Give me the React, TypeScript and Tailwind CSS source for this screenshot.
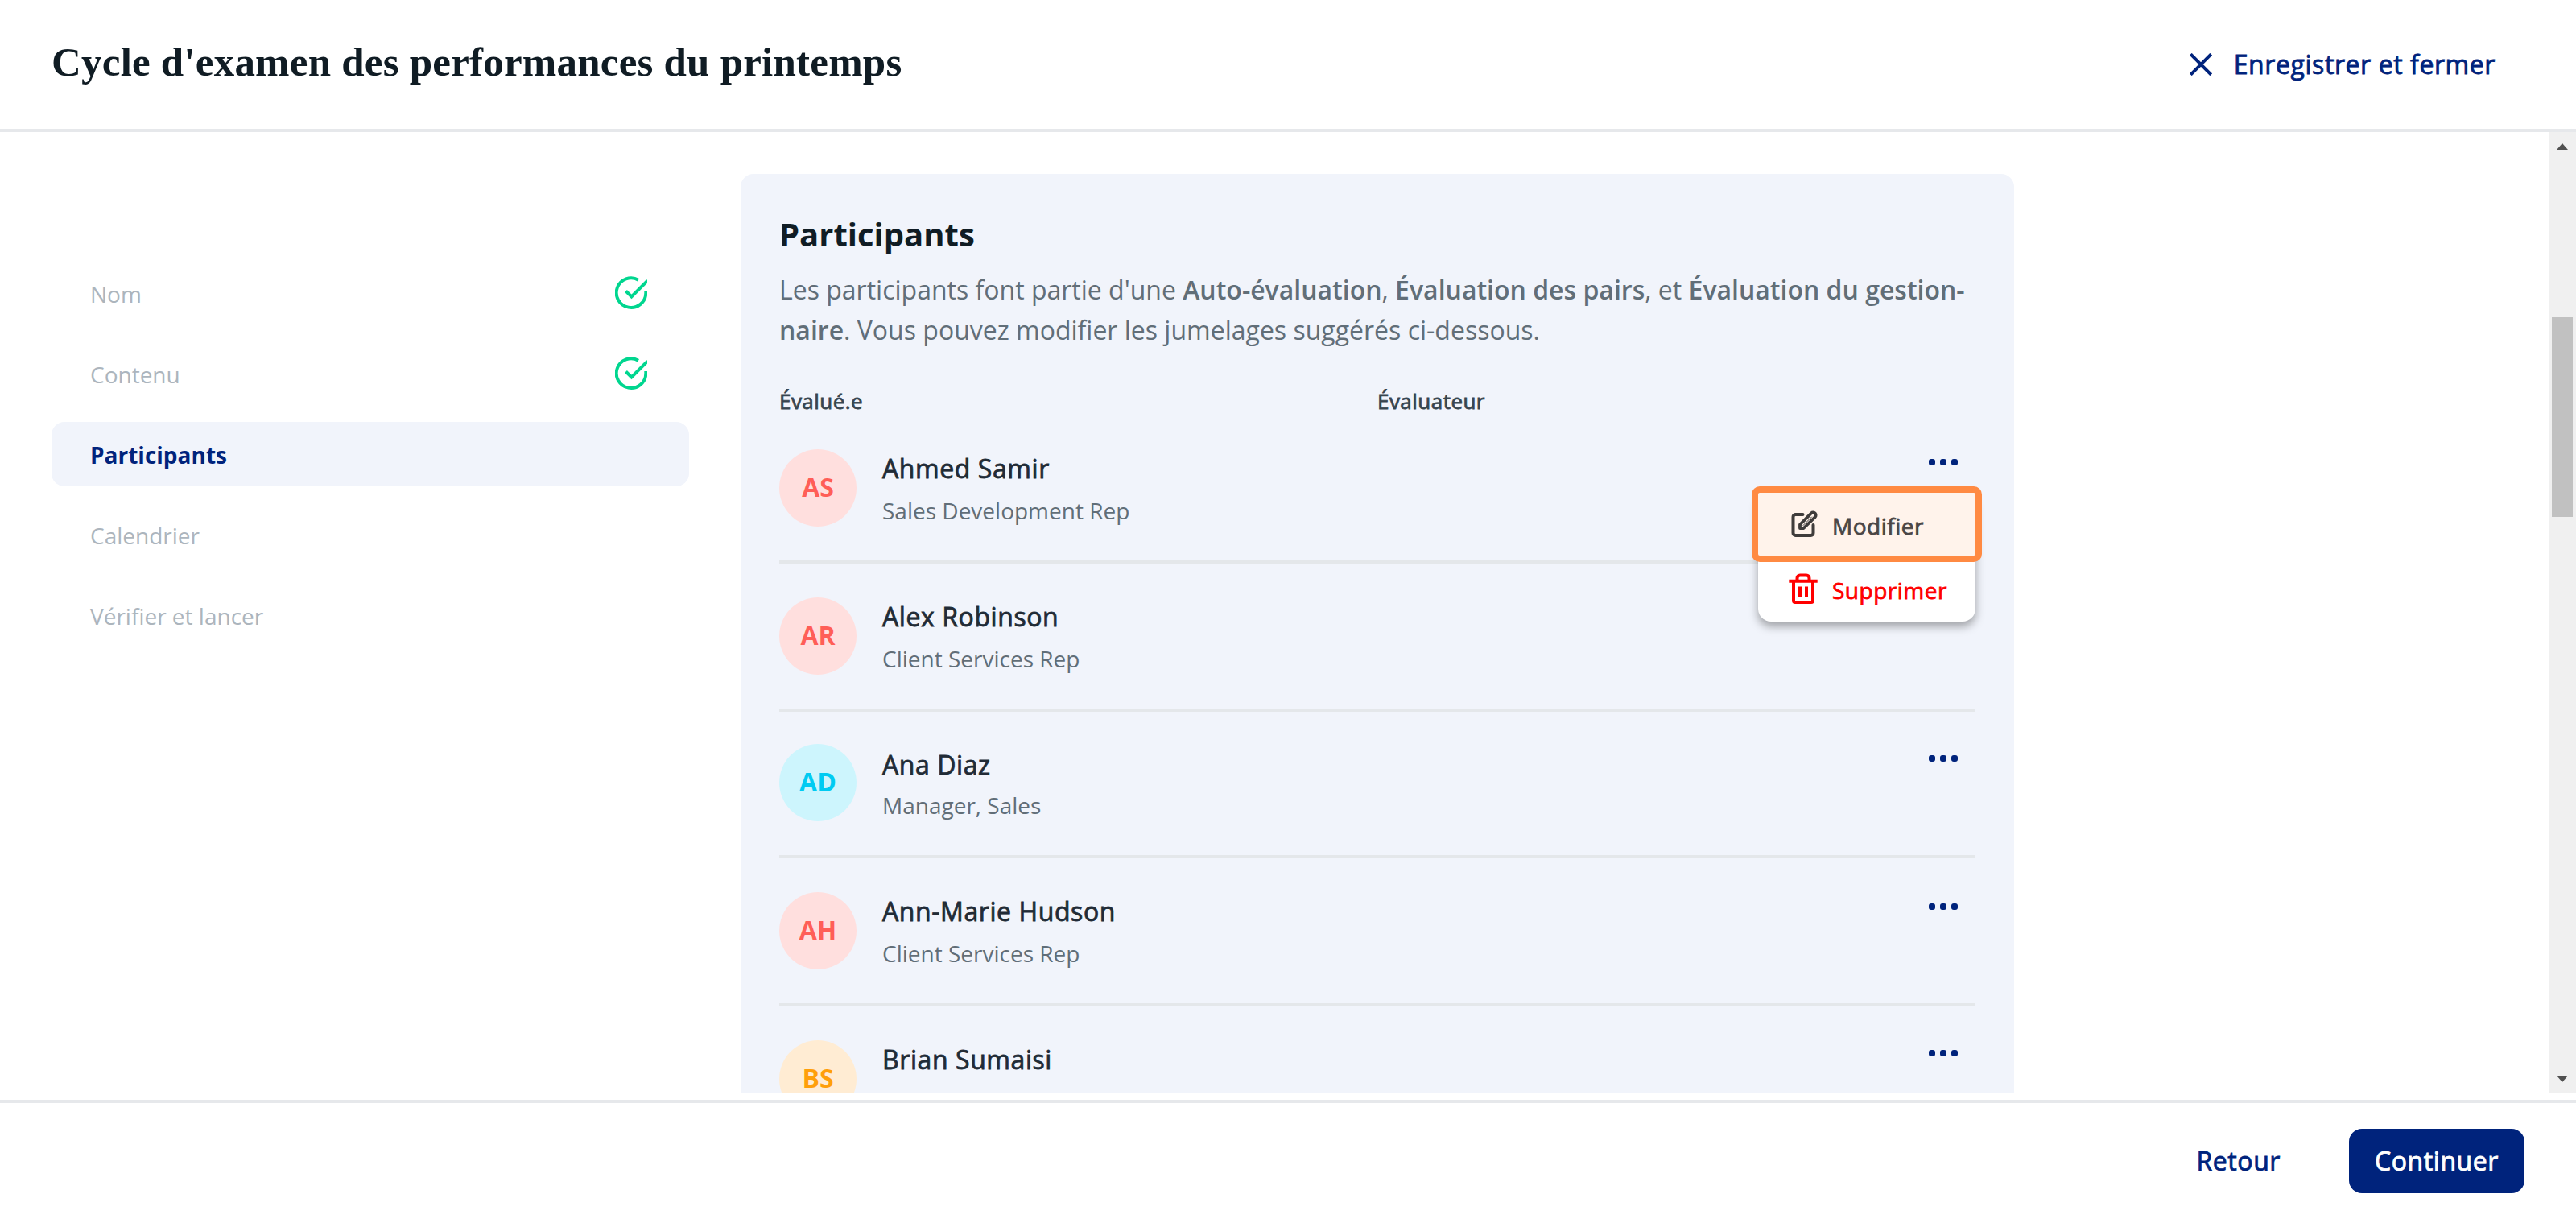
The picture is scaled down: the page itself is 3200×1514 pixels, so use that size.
import React from "react";

const steps = [
  { label: "Nom", done: true },
  { label: "Contenu", done: true },
  { label: "Participants", active: true },
  { label: "Calendrier" },
  { label: "Vérifier et lancer" },
];

const people = [
  { initials: "AS", name: "Ahmed Samir", role: "Sales Development Rep", tone: "bg-[#ffdfde] text-[#ff5e57]", menu: true, dots: true },
  { initials: "AR", name: "Alex Robinson", role: "Client Services Rep", tone: "bg-[#ffdfde] text-[#ff5e57]" },
  { initials: "AD", name: "Ana Diaz", role: "Manager, Sales", tone: "bg-[#cdf5fd] text-[#00cbf2]", dots: true, compact: true },
  { initials: "AH", name: "Ann-Marie Hudson", role: "Client Services Rep", tone: "bg-[#ffdfde] text-[#ff5e57]", dots: true },
  { initials: "BS", name: "Brian Sumaisi", tone: "bg-[#ffecd3] text-[#ff9f0a]", dots: true },
];

// Open Sans ships without a 500 cut here, so a hairline stroke thickens the regular one.
const medium = "tracking-[0.018em] [-webkit-text-stroke:0.8px_currentColor]";

function CloseIcon() {
  return (
    <svg className="h-7 w-7" viewBox="0 0 28 28" fill="none" stroke="currentColor" strokeWidth="4">
      <path d="M1.3 1.3 26.700 26.700M26.700 1.300 1.300 26.700" />
    </svg>
  );
}

function CheckIcon() {
  return (
    <svg className="h-11 w-10" viewBox="0 0 40 44" fill="none" stroke="#00d68f" strokeWidth="4">
      <path d="M38.300 19v3A18.300 18.300 0 1 1 29 5.700" />
      <path d="M13.500 19.500l7 7L40.500 6.500" />
    </svg>
  );
}

function EditIcon() {
  return (
    <svg className="h-10 w-10" viewBox="0 0 40 40" fill="none" stroke="#3f3c3b" strokeWidth="4" strokeLinecap="round" strokeLinejoin="round">
      <path d="M19.500 8H10.500a3 3 0 0 0-3 3V31a3 3 0 0 0 3 3H29.500a3 3 0 0 0 3-3V21" />
      <path d="M16 25v-4.500L30 6.300a3.400 3.400 0 0 1 4.800 4.800L20.500 25Z" strokeWidth="3.800" />
      <path d="M20 21.500 30.500 11" strokeWidth="1" />
    </svg>
  );
}

function TrashIcon() {
  return (
    <svg className="h-10 w-10" viewBox="0 0 40 40" fill="none" stroke="#ff0000" strokeWidth="4">
      <path d="M2.300 10.700h35.400M12.500 10V7a3.500 3.500 0 0 1 3.500-3.500h8A3.500 3.500 0 0 1 27.500 7v3M8 11v24a2 2 0 0 0 2 2h20a2 2 0 0 0 2-2V11" />
      <path d="M16 17.500v13.500M24 17.500v13.500" />
    </svg>
  );
}

function Dots({ low }: { low?: boolean }) {
  return (
    <div className={`mr-[22px] ml-auto flex gap-[6px] ${low ? "mt-[14px]" : "mt-3"}`}>
      <i className="h-2 w-2 rounded-[3px] bg-[#00237c]" />
      <i className="h-2 w-2 rounded-[3px] bg-[#00237c]" />
      <i className="h-2 w-2 rounded-[3px] bg-[#00237c]" />
    </div>
  );
}

function RowMenu() {
  return (
    <div className="absolute top-24 right-0 z-10 h-40 w-[270px] rounded-2xl bg-white shadow-[0_6px_12px_rgba(0,0,0,0.35)]">
      <div className="absolute -top-2 -left-2 flex h-[94px] w-[286px] items-center rounded-[10px] border-8 border-[#ff8a42] bg-[#fff3eb] pl-9 text-[28px] text-[#4a4646]">
        <EditIcon />
        <span className={`ml-4 pt-[3px] ${medium}`}>Modifier</span>
      </div>
      <div className="mt-[82px] flex h-[74px] items-center pl-9 text-[28px] text-[#ff0000]">
        <TrashIcon />
        <span className={`ml-4 pt-[3px] ${medium}`}>Supprimer</span>
      </div>
    </div>
  );
}

export default function App() {
  return (
    <div className="flex h-[1514px] w-[3200px] flex-col overflow-hidden bg-white font-['Open_Sans',sans-serif] text-[#212b36]">
      <header className="flex h-[164px] shrink-0 items-center justify-between border-b-4 border-[#e6e8eb] pr-[100px] pl-16">
        <h1 className="pb-[6px] font-['Liberation_Serif',serif] text-[51px] font-bold tracking-[0.22px] whitespace-nowrap text-[#101c24]">
          Cycle d'examen des performances du printemps
        </h1>
        <button className="flex items-center gap-[27px] text-[32px] text-[#00237c]">
          <CloseIcon />
          <span className={medium}>Enregistrer et fermer</span>
        </button>
      </header>

      <div className="flex h-[1194px] shrink-0">
        <main className="flex flex-1 items-start overflow-hidden">
          <nav className="mt-[160px] ml-16 flex h-[480px] w-[792px] shrink-0 flex-col gap-5">
            {steps.map((s) => (
              <div
                key={s.label}
                className={
                  s.active
                    ? "flex h-20 shrink-0 items-center rounded-2xl bg-[#f1f4fb] px-12 text-[28px] font-bold text-[#00237c]"
                    : "flex h-20 shrink-0 items-center justify-between pr-[52px] pl-12 text-[28px] text-[#acb5bd]"
                }
              >
                <span className="pt-[2px]">{s.label}</span>
                {s.done && <CheckIcon />}
              </div>
            ))}
          </nav>

          <section className="mt-[52px] ml-16 h-[1400px] w-[1582px] rounded-2xl bg-[#f1f4fb] px-12 pt-[45px]">
            <h2 className="h-[60px] text-[40px] leading-[60px] font-bold text-[#101c24]">Participants</h2>
            <p className="mt-[14px] text-[32px] leading-[50px] whitespace-nowrap text-[#616e78]">
              Les participants font partie d'une <b className="font-semibold">Auto-évaluation</b>,{" "}
              <b className="font-semibold">Évaluation des pairs</b>, et <b className="font-semibold">Évaluation du gestion-</b>
              <br />
              <b className="font-semibold">naire</b>. Vous pouvez modifier les jumelages suggérés ci-dessous.
            </p>
            <div className={`mt-[43px] mb-[-2px] grid h-10 grid-cols-2 text-[26px] leading-10 text-[#37454f] ${medium}`}>
              <span>Évalué.e</span>
              <span>Évaluateur</span>
            </div>
            {people.map((p) => (
              <div
                key={p.initials}
                className={`relative flex items-start border-b-4 border-[#e4e7ea] ${p.compact ? "h-[182px] pt-10" : "h-[184px] pt-[42px]"}`}
              >
                <div className={`flex h-24 w-24 items-center justify-center rounded-full pb-[3px] text-[32px] font-bold ${p.tone}`}>
                  {p.initials}
                </div>
                <div className={p.compact ? "ml-8 pt-[2px]" : "ml-8"}>
                  <div className={`text-[32px] leading-[48px] ${medium}`}>{p.name}</div>
                  {p.role && (
                    <div className={`text-[28px] leading-[44px] text-[#616e78] ${p.compact ? "mt-1" : "mt-[6px]"}`}>{p.role}</div>
                  )}
                </div>
                {p.dots && <Dots low={p.compact || p.initials === "AH"} />}
                {p.menu && <RowMenu />}
              </div>
            ))}
          </section>
        </main>

        <div className="flex w-[34px] flex-col items-center bg-[#f0f0f0] pt-[14px] pb-[14px]">
          <svg className="h-2 w-[14px]" viewBox="0 0 14 8" fill="#505050">
            <path d="M0 8 7 0l7 8Z" />
          </svg>
          <div className="mt-[208px] h-[248px] w-[26px] bg-[#c1c1c1]" />
          <svg className="mt-auto h-2 w-[14px]" viewBox="0 0 14 8" fill="#505050">
            <path d="M0 0 7 8l7-8Z" />
          </svg>
        </div>
      </div>

      <footer className="mt-2 flex h-[148px] shrink-0 items-center justify-end border-t-4 border-[#e6e8eb] pr-16 text-[32px]">
        <button className={`text-[#00237c] ${medium}`}>Retour</button>
        <button className={`ml-[85px] h-20 w-[218px] rounded-2xl bg-[#00237c] text-white ${medium}`}>Continuer</button>
      </footer>
    </div>
  );
}
